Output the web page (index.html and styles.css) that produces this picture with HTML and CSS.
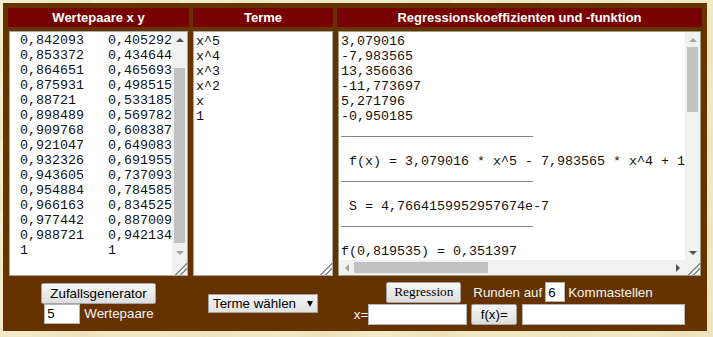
FILE: index.html
```html
<!DOCTYPE html>
<html lang="de">
<head>
  <meta charset="UTF-8">
  <meta name="viewport" content="width=device-width, initial-scale=1.0">
  <title>Regression</title>
  <link rel="stylesheet" href="styles.css">
</head>
<body>
  <div class="app">
    <div class="col-head">Wertepaare x y</div>
    <div class="col-head">Terme</div>
    <div class="col-head">Regressionskoeffizienten und -funktion</div>

    <div class="frame frame-pairs">
      <textarea id="pairs" class="box" wrap="off" spellcheck="false"> 0,819535   0,351397
 0,830814   0,377593
 0,842093   0,405292
 0,853372   0,434644
 0,864651   0,465693
 0,875931   0,498515
 0,88721    0,533185
 0,898489   0,569782
 0,909768   0,608387
 0,921047   0,649083
 0,932326   0,691955
 0,943605   0,737093
 0,954884   0,784585
 0,966163   0,834525
 0,977442   0,887009
 0,988721   0,942134
 1          1
</textarea>
      <div class="vbar">
        <span class="sb-btn"><i class="tri tri-up on"></i></span>
        <span class="sb-track"><span class="sb-thumb" style="height: 175px; margin-top: 21px;"></span></span>
        <span class="sb-btn"><i class="tri tri-down"></i></span>
        <span class="grip"></span>
      </div>
    </div>

    <div class="frame frame-terms">
      <textarea class="box box-terms" spellcheck="false">x^5
x^4
x^3
x^2
x
1</textarea>
    </div>

    <div class="frame frame-result">
      <textarea class="box" wrap="off" spellcheck="false">3,079016
-7,983565
13,356636
-11,773697
5,271796
-0,950185
________________________

 f(x) = 3,079016 * x^5 - 7,983565 * x^4 + 13,356636 * x^3 - 11,773697 * x^2 + 5,271796 * x - 0,950185
________________________

 S = 4,7664159952957674e-7
________________________

f(0,819535) = 0,351397
f(0,830814) = 0,377593
f(0,842093) = 0,405292
f(0,853372) = 0,434644
f(0,864651) = 0,465693
f(0,875931) = 0,498515
f(0,88721) = 0,533185
f(0,898489) = 0,569782
f(0,909768) = 0,608387
f(0,921047) = 0,649083
f(0,932326) = 0,691955
f(0,943605) = 0,737093
f(0,954884) = 0,784585
f(0,966163) = 0,834525
f(0,977442) = 0,887009
f(0,988721) = 0,942134
f(1) = 1</textarea>
      <div class="vbar">
        <span class="sb-btn"><i class="tri tri-up"></i></span>
        <span class="sb-track"><span class="sb-thumb" style="height: 65px;"></span></span>
        <span class="sb-btn"><i class="tri tri-down on"></i></span>
      </div>
      <div class="hbar">
        <span class="sb-btn"><i class="tri tri-left"></i></span>
        <span class="sb-track"><span class="sb-thumb" style="width: 134px;"></span></span>
        <span class="sb-btn"><i class="tri tri-right on"></i></span>
      </div>
      <span class="grip"></span>
    </div>

    <div class="controls">
      <button class="btn">Zufallsgenerator</button>
      <div class="count-line">
        <input class="field field-count" type="text" value="5">
        <span class="label">Wertepaare</span>
      </div>
    </div>
    <div class="controls">
      <span class="select-wrap">
        <select class="terms-select">
          <option>Terme wählen</option>
        </select>
      </span>
    </div>
    <div class="controls">
      <div class="calc-line">
        <button class="btn btn-serif">Regression</button>
        <span class="label label-round">Runden auf</span>
        <input class="field field-round" type="text" value="6">
        <span class="label label-digits">Kommastellen</span>
      </div>
      <div class="calc-line">
        <span class="label">x=</span>
        <input class="field field-x" type="text">
        <button class="btn btn-fx">f(x)=</button>
        <input class="field field-y" type="text">
      </div>
    </div>
  </div>

  <script src="script.js"></script>
</body>
</html>
```

FILE: styles.css
```css
* {
  box-sizing: border-box;
}

body {
  margin: 0;
  min-height: 100vh;
  font-family: "Liberation Sans", Arial, sans-serif;
  font-size: 13.33px;
  background-color: #f1e8c5;
  background-image:
    radial-gradient(circle at 20% 30%, rgba(255,255,240,0.5) 0, transparent 40px),
    radial-gradient(circle at 70% 60%, rgba(225,210,160,0.35) 0, transparent 50px);
  background-size: 90px 70px, 120px 90px;
}

.app {
  display: grid;
  grid-template-columns: 181px 140px 365px;
  grid-template-rows: 19px 245px 46px;
  gap: 4px;
  padding: 5px;
  margin: 3px;
  width: max-content;
  background: #663300;
}

.col-head {
  background: #770000;
  color: #fff;
  font-weight: bold;
  font-size: 13px;
  text-align: center;
  line-height: 19px;
}

/* textarea frames with their scrollbars */
.frame {
  display: grid;
  height: 245px;
  border: 1px solid #a9a9a9;
  background: #fff;
}

.frame-pairs {
  grid-template-columns: 1fr 15px;
  width: 179px;
  margin-left: 1px;
}

.frame-terms {
  grid-template-columns: 1fr;
}

.frame-result {
  grid-template-columns: 1fr 15px;
  grid-template-rows: 1fr 15px;
  width: 363px;
  margin-left: 1px;
  border-color: #97a07c;
}

.box {
  display: block;
  width: 100%;
  height: 100%;
  min-width: 0;
  margin: 0;
  padding: 2px;
  border: 0;
  outline: none;
  resize: none;
  overflow: hidden;
  background: #fff;
  color: #111;
  font-family: "Liberation Mono", "Courier New", monospace;
  font-size: 13.33px;
  line-height: 15px;
  white-space: pre;
}

.box-terms {
  resize: both;
  white-space: pre-wrap;
}

.box-terms::-webkit-resizer {
  background: linear-gradient(135deg, transparent 0 58%, #8a8a8a 58% 64%, transparent 64% 76%, #8a8a8a 76% 82%, transparent 82%);
}

.vbar,
.hbar {
  display: flex;
  background: #f1f1f1;
}

.vbar {
  flex-direction: column;
}

.sb-btn {
  flex: none;
  width: 15px;
  height: 15px;
  display: flex;
  align-items: center;
  justify-content: center;
}

.sb-track {
  flex: 1;
  display: flex;
}

.vbar .sb-track {
  flex-direction: column;
  padding: 0 2px;
}

.hbar .sb-track {
  padding: 2px 0;
}

.sb-thumb {
  flex: none;
  background: #c1c1c1;
}

.tri {
  width: 0;
  height: 0;
  border: 4px solid transparent;
  --c: #a3a3a3;
}

.tri.on {
  --c: #505050;
}

.tri-up {
  border-top-width: 0;
  border-bottom-color: var(--c);
}

.tri-down {
  border-bottom-width: 0;
  border-top-color: var(--c);
}

.tri-left {
  border-left-width: 0;
  border-right-color: var(--c);
}

.tri-right {
  border-right-width: 0;
  border-left-color: var(--c);
}

.grip {
  flex: none;
  width: 15px;
  height: 15px;
  background-color: #f1f1f1;
  background-image: linear-gradient(135deg, transparent 0 58%, #8a8a8a 58% 64%, transparent 64% 76%, #8a8a8a 76% 82%, transparent 82%);
}

/* bottom controls */
.controls {
  display: flex;
  flex-direction: column;
  align-items: center;
  justify-content: center;
  color: #f4f4f4;
}

.count-line,
.calc-line {
  display: flex;
  align-items: center;
}

.calc-line + .calc-line {
  margin-top: 1px;
}

.label {
  color: #f4f4f4;
}

.btn {
  height: 21px;
  padding: 1px 8px;
  border: 1px solid #a3a3a3;
  border-radius: 2px;
  background: linear-gradient(#f7f7f7, #dddddd);
  color: #000;
  font-family: "Liberation Sans", Arial, sans-serif;
  font-size: 13.33px;
}

.btn-serif {
  width: 75px;
  padding: 1px 0;
  font-family: "Liberation Serif", "Times New Roman", serif;
}

.btn-fx {
  width: 46px;
  padding: 1px 0;
  margin: 0 5px 0 4px;
}

.field {
  height: 20px;
  padding: 1px 2px;
  border: 1px solid #b5b5b5;
  background: #fff;
  color: #000;
  font-family: "Liberation Sans", Arial, sans-serif;
  font-size: 13.33px;
}

.field-count {
  width: 36px;
  margin: 0 4px 0 1px;
}

.label-round {
  margin: 0 3px 0 12px;
}

.field-round {
  width: 20px;
}

.label-digits {
  margin-left: 3px;
}

.field-x {
  width: 99px;
  height: 21px;
}

.field-y {
  width: 163px;
  height: 21px;
}

.select-wrap {
  position: relative;
  display: inline-block;
}

.select-wrap::after {
  content: "";
  position: absolute;
  right: 5px;
  top: 7px;
  border-left: 3.5px solid transparent;
  border-right: 3.5px solid transparent;
  border-top: 6px solid #000;
  pointer-events: none;
}

.terms-select {
  appearance: none;
  -webkit-appearance: none;
  width: 110px;
  height: 19px;
  padding: 0 0 0 4px;
  border: 1px solid #a3a3a3;
  border-radius: 0;
  background: linear-gradient(#f4f4f4, #e2e2e2);
  color: #000;
  font-family: "Liberation Sans", Arial, sans-serif;
  font-size: 13.33px;
}
```

FILE: script.js
```js
const pairs = document.getElementById('pairs');
pairs.scrollTop = pairs.scrollHeight;
```
